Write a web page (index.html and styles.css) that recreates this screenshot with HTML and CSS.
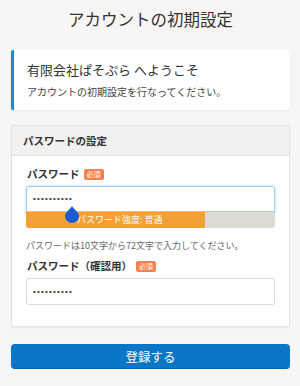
FILE: index.html
```html
<!DOCTYPE html>
<html lang="ja">
<head>
<meta charset="utf-8">
<link rel="stylesheet" href="styles.css">
</head>
<body>
<h1 class="title">アカウントの初期設定</h1>
<section class="welcome">
  <h2 class="welcome-title">有限会社ぱそぷら へようこそ</h2>
  <p class="welcome-text">アカウントの初期設定を行なってください。</p>
</section>
<section class="card">
  <div class="card-header">パスワードの設定</div>
  <div class="card-body">
    <div class="label-row"><span class="label">パスワード</span><span class="badge">必須</span></div>
    <div class="pw-wrap">
      <div class="input focused"><span class="dots">••••••••••</span></div>
      <div class="strength">
        <div class="strength-fill" style="width:72%"></div>
        <span class="strength-text">パスワード強度: 普通</span>
      </div>
      <svg class="handle" width="14" height="17" viewBox="0 0 14 17"><path d="M7 0 C9 3 14 7 14 10 A7 7 0 0 1 0 10 C0 7 5 3 7 0Z" fill="#1a5ccf"/></svg>
    </div>
    <p class="help">パスワードは10文字から72文字で入力してください。</p>
    <div class="label-row"><span class="label">パスワード（確認用）</span><span class="badge">必須</span></div>
    <div class="input"><span class="dots">••••••••••</span></div>
  </div>
</section>
<button class="submit">登録する</button>
</body>
</html>
```
FILE: styles.css
```css
html, body { margin: 0; padding: 0; }
body {
  background: #f7f6f4;
  font-family: "Noto Sans CJK JP", "Noto Sans", sans-serif;
  color: #333;
  padding: 0 10px 0 11px;
  width: 279px;
}
.title {
  margin: 0 0 20px;
  padding-top: 8px;
  font-size: 16.5px;
  line-height: 22px;
  font-weight: 400;
  text-align: center;
  color: #333;
}
.welcome {
  background: #fff;
  border-left: 3px solid #1f87d6;
  border-radius: 2px;
  box-shadow: 0 1px 2px rgba(0,0,0,0.06);
  height: 60px;
  box-sizing: border-box;
  padding: 10px 12px 0 13px;
}
.welcome-title {
  margin: 0;
  font-size: 13px;
  line-height: 20px;
  font-weight: 400;
  color: #333;
}
.welcome-text {
  margin: 5px 0 0;
  font-size: 10px;
  line-height: 14px;
  color: #444;
}
.card {
  margin-top: 15px;
  background: #fff;
  border: 1px solid #e6e4e2;
  border-radius: 2px;
  box-shadow: 0 1px 2px rgba(0,0,0,0.05);
}
.card-header {
  background: #f2f1f0;
  border-bottom: 1px solid #e6e4e2;
  height: 30px;
  box-sizing: border-box;
  padding: 0 11px;
  font-size: 10.5px;
  font-weight: 700;
  line-height: 30px;
  color: #333;
}
.card-body {
  padding: 10px 14px 21px;
}
.label-row {
  display: flex;
  align-items: center;
  gap: 4px;
  height: 16px;
  padding-left: 1px;
}
.label {
  font-size: 10.5px;
  font-weight: 700;
  color: #333;
  line-height: 16px;
}
.badge {
  background: #f5814e;
  color: #fff;
  font-size: 7px;
  line-height: 11px;
  height: 11px;
  padding: 0 3px;
  border-radius: 2px;
}
.pw-wrap {
  position: relative;
  margin-top: 4px;
}
.input {
  display: flex;
  align-items: center;
  height: 27px;
  box-sizing: border-box;
  border: 1px solid #dcdad8;
  border-radius: 3px;
  margin-top: 4px;
  padding-left: 6px;
  background: #fff;
}
.dots {
  font-family: "Liberation Sans", Arial, sans-serif;
  font-size: 8px;
  letter-spacing: 1.2px;
  color: #333;
  line-height: 10px;
}
.input.focused {
  margin-top: 0;
  height: 26px;
  border-color: #9fcdf3;
  border-radius: 3px 3px 0 0;
  box-shadow: 0 0 3px rgba(120,180,240,0.6);
}
.strength {
  position: relative;
  height: 16px;
  background: #dedbd7;
  border-radius: 0 0 3px 3px;
  overflow: hidden;
}
.strength-fill {
  height: 100%;
  background: #f3a034;
}
.strength-text {
  position: absolute;
  left: 51px;
  top: 0;
  line-height: 16px;
  font-size: 9px;
  color: #fff;
}
.handle {
  position: absolute;
  left: 39px;
  top: 20px;
}
.help {
  margin: 11px 0 6px;
  font-size: 9px;
  line-height: 13px;
  color: #666;
}
.submit {
  display: block;
  width: 100%;
  margin-top: 17px;
  height: 25px;
  border: none;
  border-bottom: 1px solid #0865ad;
  border-radius: 4px;
  background: #0a77c6;
  color: #fff;
  font-family: "Noto Sans CJK JP", "Noto Sans", sans-serif;
  font-size: 12.5px;
  padding: 0;
}
```
